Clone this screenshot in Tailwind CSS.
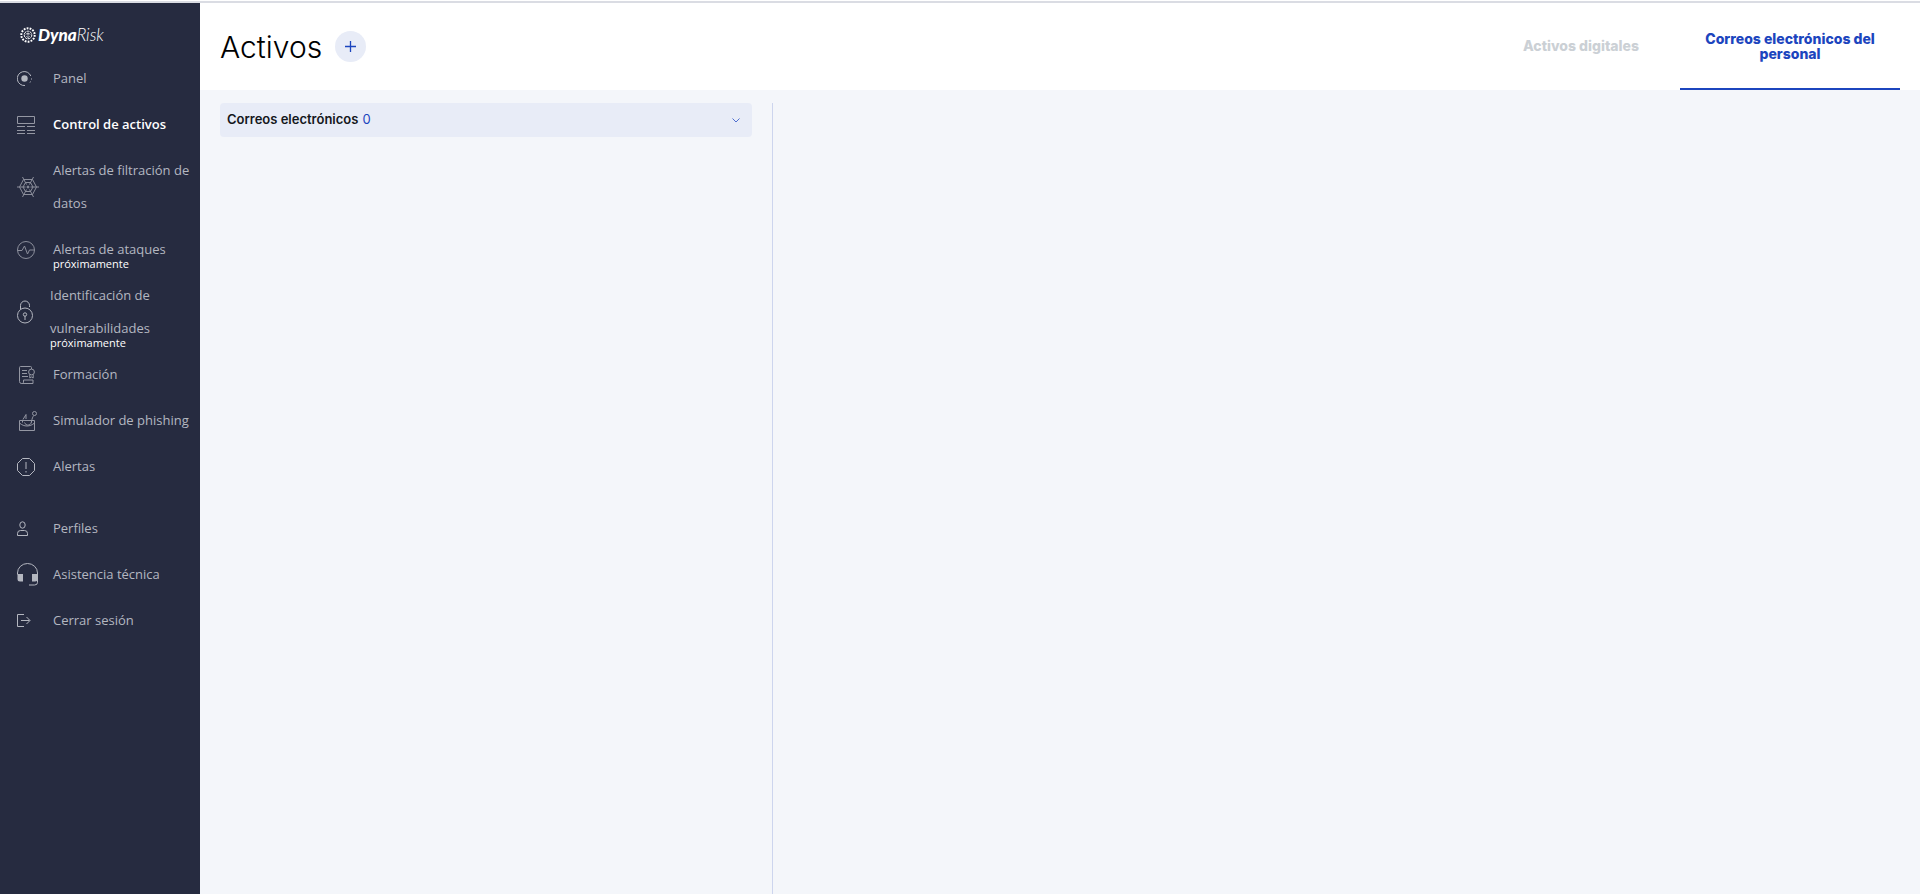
<!DOCTYPE html>
<html lang="es">
<head>
    <meta charset="UTF-8">
    <meta name="viewport" content="width=device-width, initial-scale=1.0">
    <title>DynaRisk - Activos</title>
    <script src="https://cdn.jsdelivr.net/npm/@tailwindcss/browser@4"></script>
</head>
<body class="min-h-screen flex flex-col bg-[#f4f6fa] font-['Inter',sans-serif]">
    <div class="h-[3px] shrink-0 border-t border-white bg-[#dadce3]"></div>
    <div class="flex flex-1">
        <!-- Sidebar -->
        <aside class="w-[200px] shrink-0 bg-[#262b40] pt-5 text-[13px] leading-[33px] text-[#b4b7c0] font-['Open_Sans',sans-serif]">
            <a href="#" class="flex items-center h-6 pl-5 gap-0.5 text-white text-[17px] leading-6 italic font-['Lato',sans-serif]">
                <svg class="size-4" viewBox="0 0 16 16" fill="none" stroke="currentColor">
                    <circle cx="8" cy="8" r="6.7" stroke-width="2" stroke-dasharray="1.8 1.2" />
                    <circle cx="8" cy="8" r="3.800" stroke-width="1" stroke-dasharray="2.6 .6" />
                    <path d="M6 7.5c.6-1.8 3.4-1.8 4 0M6.5 9.5c1 .9 2.200.9 3 0M8 7v1.500" stroke-width=".9" />
                </svg>
                <span><span class="font-black">Dyna</span><span class="font-light">Risk</span></span>
            </a>
            <nav class="flex flex-col gap-[13px] mt-[15px]">
                <a href="#" class="flex items-center pl-[17px]">
                    <span class="w-9 shrink-0">
                        <svg class="size-4" viewBox="0 0 16 16" fill="none" stroke="currentColor">
                            <circle cx="7.500" cy="7.500" r="3.200" fill="currentColor" stroke="none" />
                            <path d="M8 14.500A7 7 0 1 1 13.800 5M14.500 7.500v1M13.500 10.500l-.5 1" />
                        </svg>
                    </span>
                    Panel
                </a>
                <a href="#" class="flex items-center pl-[17px] text-white font-semibold">
                    <span class="w-9 shrink-0 text-[#9497a3]">
                        <svg class="w-[18px] h-5" viewBox="0 0 18 20" fill="none" stroke="currentColor">
                            <path d="M.5 1.500h17v7H.5zM0 11.500h8M10 11.500h8M0 15.500h8M10 15.500h8M0 18.500h8M10 18.500h8" />
                        </svg>
                    </span>
                    Control de activos
                </a>
                <a href="#" class="flex items-center pl-[17px]">
                    <span class="w-9 shrink-0 text-[#8b8e9b]">
                        <svg class="w-[22px] h-5" viewBox="0 0 22 20" fill="none" stroke="currentColor">
                            <path d="M6.500 2.500h9l4 7.500-4 7.500h-9L2.500 10z" />
                            <path d="M8.500 5.500h5L16 10l-2.500 4.500h-5L6 10z" />
                            <path d="M0 10h8.500M13.500 10H22M5.500 0l4 7.500M16.500 0l-4 7.500M5.500 20l4-7.500M16.500 20l-4-7.500" />
                            <circle cx="11" cy="10" r="1" fill="currentColor" />
                        </svg>
                    </span>
                    Alertas de filtración de datos
                </a>
                <a href="#" class="relative flex items-center pl-[17px]">
                    <span class="w-9 shrink-0 text-[#8b8e9b]">
                        <svg class="size-[18px]" viewBox="0 0 18 18" fill="none" stroke="currentColor">
                            <circle cx="9" cy="9" r="8.500" />
                            <path d="M.5 9.500h4.500l2.500-4.500 3 8 2-4h5" />
                        </svg>
                    </span>
                    Alertas de ataques
                    <span class="absolute left-[53px] top-[25px] text-[11px] leading-3 text-white">próximamente</span>
                </a>
                <a href="#" class="relative flex items-center pl-[17px]">
                    <span class="w-[33px] shrink-0">
                        <svg class="w-4 h-6" viewBox="0 0 16 24" fill="none" stroke="currentColor">
                            <circle cx="8" cy="15.500" r="7.500" />
                            <path d="M3.500 9V5.500a4.500 4.500 0 0 1 9 0V7M8 16v4" />
                            <circle cx="8" cy="14.500" r="1.700" />
                        </svg>
                    </span>
                    Identificación de vulnerabilidades
                    <span class="absolute left-[50px] top-[58px] text-[11px] leading-3 text-white">próximamente</span>
                </a>
                <a href="#" class="flex items-center pl-[17px]">
                    <span class="w-9 shrink-0 pl-0.5 text-[#9497a3]">
                        <svg class="w-4 h-[18px]" viewBox="0 0 16 18" fill="none" stroke="currentColor">
                            <path d="M12.500 3V1.500a1 1 0 0 0-1-1h-10a1 1 0 0 0-1 1v14a2 2 0 0 0 2 2h11.500v-3.500H4.500v2a1.500 1.500 0 0 1-2 1.500M3 4.500h5M3 7.500h5M3 10.500h6" />
                            <circle cx="12.500" cy="6" r="2.900" />
                            <path d="M10.800 8.500V12l1.700-1 1.700 1V8.500" />
                        </svg>
                    </span>
                    Formación
                </a>
                <a href="#" class="flex items-center pl-[17px]">
                    <span class="w-9 shrink-0 pl-0.5 text-[#9497a3]">
                        <svg class="w-[18px] h-5" viewBox="0 0 18 20" fill="none" stroke="currentColor">
                            <path d="M.5 9.500h15v10H.5zM.5 12c4.500 4 10.500 4 15 0M3.500 9.500v2M12.500 9.500v2" />
                            <path d="M15 4.500c-3 2.500-1.500 8.500-5 9.500-2.500.5-4-1-4.500-2.500M4 8.500l3-5v4.500" />
                            <circle cx="15.500" cy="2.500" r="2" />
                        </svg>
                    </span>
                    Simulador de phishing
                </a>
                <a href="#" class="flex items-center pl-[17px]">
                    <span class="w-9 shrink-0">
                        <svg class="size-[18px]" viewBox="0 0 18 18" fill="none" stroke="currentColor">
                            <path d="M5.500.5h7l5 5v7l-5 5h-7l-5-5v-7zM9 4v7M9 13v1.500" />
                        </svg>
                    </span>
                    Alertas
                </a>
            </nav>
            <nav class="flex flex-col gap-[13px] mt-[29px]">
                <a href="#" class="flex items-center pl-[17px]">
                    <span class="w-9 shrink-0">
                        <svg class="w-3 h-4" viewBox="0 0 12 16" fill="none" stroke="currentColor">
                            <ellipse cx="5.500" cy="4" rx="2.700" ry="3.200" />
                            <path d="M.5 14.500v-2q0-3 3-3h4q3 0 3 3v2z" />
                        </svg>
                    </span>
                    Perfiles
                </a>
                <a href="#" class="flex items-center pl-[17px]">
                    <span class="w-9 shrink-0">
                        <svg class="w-[21px] h-[23px]" viewBox="0 0 21 23" fill="none" stroke="currentColor">
                            <path d="M.5 11.500v-1.500a10 9.500 0 0 1 20 0v9.500q0 2.500-3 2.500h-5.500" />
                            <path d="M.5 11h5.500v7.500H3q-2.500 0-2.500-2.500zM15 11h5.500v5q0 2.500-2.500 2.500h-3z" fill="currentColor" stroke="none" />
                        </svg>
                    </span>
                    Asistencia técnica
                </a>
                <a href="#" class="flex items-center pl-[17px]">
                    <span class="w-9 shrink-0">
                        <svg class="w-3.5 h-[13px]" viewBox="0 0 14 13" fill="none" stroke="currentColor">
                            <path d="M7 .5H.5v12H7M4 6.500h8.500M9.500 3l3.500 3.500L9.500 10" />
                        </svg>
                    </span>
                    Cerrar sesión
                </a>
            </nav>
        </aside>

        <main class="flex-1 flex flex-col">
            <header class="flex justify-between h-[87px] px-5 bg-white">
                <div class="flex items-center gap-[13px]">
                    <h1 class="text-[30px] leading-9 font-light text-black">Activos</h1>
                    <button type="button" aria-label="Añadir" class="flex items-center justify-center size-[31px] rounded-full bg-[#e8ecf7] text-[#1c45be]">
                        <svg class="size-[11px]" viewBox="0 0 11 11" fill="none" stroke="currentColor">
                            <path d="M5.500 0v11M0 5.500h11" stroke-width="1.300" />
                        </svg>
                    </button>
                </div>
                <div class="flex text-sm leading-[15px] font-extrabold text-center">
                    <button type="button" class="w-[198px] border-b-2 border-transparent text-[#cbd0d5]">Activos digitales</button>
                    <button type="button" class="w-[220px] px-5 border-b-2 border-[#1c45be] text-[#1c45be]">Correos electrónicos del personal</button>
                </div>
            </header>
            <div class="flex-1 flex pt-[13px]">
                <!-- Asset list -->
                <section class="w-1/3 px-5 border-r border-[#cdd5ee]">
                    <button type="button" class="flex items-center w-full h-[34px] px-[7px] rounded bg-[#e8ecf7] text-[13px] text-[#14171c]">
                        <span class="font-semibold">Correos electrónicos</span>
                        <span class="ml-1 text-[#1c45be]">0</span>
                        <svg class="ml-auto mr-[5px] w-2 h-[5px]" viewBox="0 0 8 5" fill="none" stroke="#4f6fd0">
                            <path d="M.5.5L4 4 7.500.5" />
                        </svg>
                    </button>
                </section>
                <section class="flex-1"></section>
            </div>
        </main>
    </div>
</body>
</html>
